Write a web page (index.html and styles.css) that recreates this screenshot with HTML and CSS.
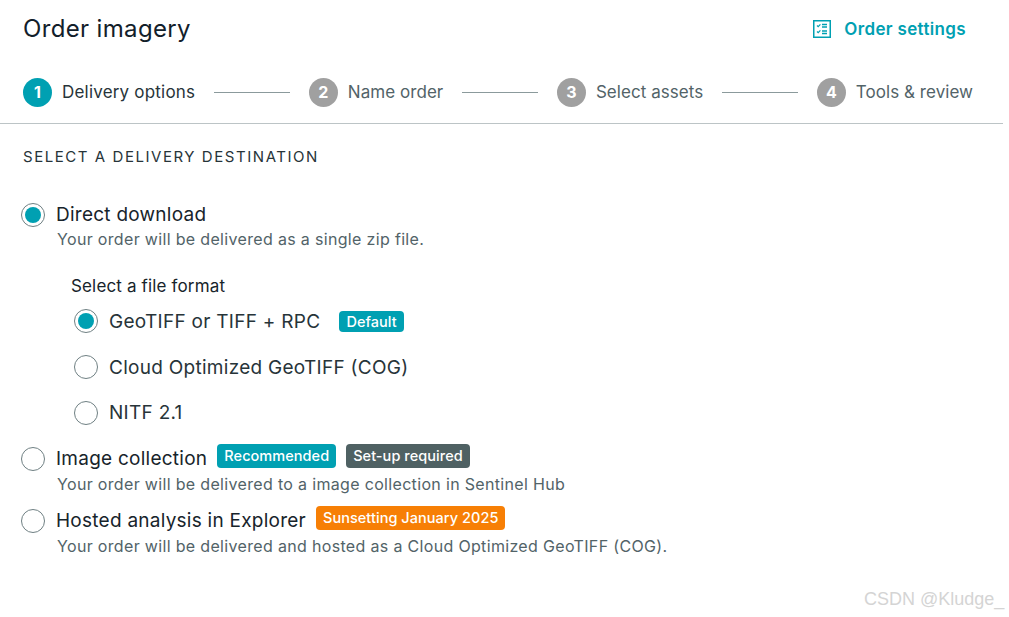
FILE: index.html
```html
<!DOCTYPE html>
<html lang="en">
<head>
    <meta charset="UTF-8">
    <title>Order imagery</title>
    <link rel="stylesheet" href="styles.css">
</head>
<body>
    <div class="panel">
        <div class="header">
            <h1>Order imagery</h1>
            <a href="#" class="settings-link">
                <svg class="settings-icon" width="18" height="18" viewBox="0 0 18 18" fill="none" stroke="#00a0b2">
                    <rect x="0.75" y="0.75" width="16.5" height="16.5" stroke-width="1.5"/>
                    <path d="M4 5.5l1.2 1.2L7.4 4.4M4 11.5l1.2 1.2 2.2-2.3" stroke-width="1.2"/>
                    <path d="M9 4.5h5M9 7h5M9 11h5M9 13.5h5" stroke-width="1.4"/>
                </svg>
                Order settings
            </a>
        </div>

        <div class="stepper">
            <div class="step active"><span class="step-num">1</span>Delivery options</div>
            <div class="step-line"></div>
            <div class="step"><span class="step-num">2</span>Name order</div>
            <div class="step-line"></div>
            <div class="step"><span class="step-num">3</span>Select assets</div>
            <div class="step-line"></div>
            <div class="step"><span class="step-num">4</span>Tools &amp; review</div>
        </div>

        <div class="content">
            <h2>SELECT A DELIVERY DESTINATION</h2>

            <div class="option first">
                <div class="option-row"><span class="radio checked"></span>Direct download</div>
                <p class="option-desc">Your order will be delivered as a single zip file.</p>
            </div>

            <div class="formats">
                <div class="formats-title">Select a file format</div>
                <div class="format-row"><span class="radio checked"></span>GeoTIFF or TIFF + RPC<span class="badge teal default-badge">Default</span></div>
                <div class="format-row"><span class="radio"></span>Cloud Optimized GeoTIFF (COG)</div>
                <div class="format-row"><span class="radio"></span>NITF 2.1</div>
            </div>

            <div class="option">
                <div class="option-row"><span class="radio"></span>Image collection<span class="badge teal">Recommended</span><span class="badge slate">Set-up required</span></div>
                <p class="option-desc">Your order will be delivered to a image collection in Sentinel Hub</p>
            </div>

            <div class="option">
                <div class="option-row"><span class="radio"></span>Hosted analysis in Explorer<span class="badge orange">Sunsetting January 2025</span></div>
                <p class="option-desc">Your order will be delivered and hosted as a Cloud Optimized GeoTIFF (COG).</p>
            </div>
        </div>
    </div>
    <div class="watermark">CSDN @Kludge_</div>
</body>
</html>
```

FILE: styles.css
```css
/* Global Styles */
body {
    font-family: 'Inter', 'Liberation Sans', sans-serif;
    background-color: #fff;
    color: #17242b;
    margin: 0;
    padding: 0;
    height: 617px;
    overflow: hidden;
}

.panel {
    width: 1003px;
}

/* Header */
.header {
    display: flex;
    justify-content: space-between;
    align-items: center;
    height: 58px;
    padding: 0 37px 0 23px;
}

h1 {
    margin: 0 0 2px;
    font-size: 24px;
    font-weight: 400;
    letter-spacing: 0.35px;
    color: #12202a;
}

.settings-link {
    display: flex;
    align-items: center;
    gap: 13px;
    color: #00a0b2;
    font-size: 17px;
    font-weight: 600;
    letter-spacing: 0.35px;
    text-decoration: none;
}

/* Stepper */
.stepper {
    display: flex;
    align-items: center;
    box-sizing: border-box;
    height: 66px;
    padding: 3px 30px 0 23px;
    border-bottom: 1px solid #bcc4c6;
    font-size: 17px;
    letter-spacing: 0.05px;
}

.step {
    display: flex;
    align-items: center;
    gap: 10px;
    color: #526368;
}

.step.active {
    color: #273439;
    letter-spacing: 0.2px;
}

.step-num {
    display: flex;
    justify-content: center;
    align-items: center;
    width: 29px;
    height: 29px;
    border-radius: 50%;
    background-color: #a0a0a0;
    color: #fff;
    font-size: 16px;
    font-weight: 700;
    letter-spacing: 0;
}

.step.active .step-num {
    background-color: #00a0b2;
}

.step-line {
    flex: 1;
    height: 1px;
    margin: 0 19px;
    background-color: #8b9a9c;
}

/* Content */
.content {
    padding: 0 0 0 21px;
}

h2 {
    margin: 0;
    padding: 24px 0 0 2px;
    font-size: 15px;
    line-height: 17px;
    font-weight: 400;
    letter-spacing: 1.55px;
    color: #273439;
}

.option {
    margin-bottom: 16px;
}

.option.first {
    margin-top: 38px;
    margin-bottom: 0;
}

.option-row {
    display: flex;
    align-items: center;
    font-size: 19px;
    line-height: 24px;
    letter-spacing: 0.25px;
    color: #17242b;
}

.option-row .radio {
    margin-right: 11px;
}

.option-desc {
    margin: 4px 0 0 36px;
    font-size: 16px;
    line-height: 18px;
    letter-spacing: 0.33px;
    color: #526368;
}

.option.first .option-desc {
    margin-top: 3px;
}

.radio {
    flex: none;
    box-sizing: border-box;
    position: relative;
    width: 24px;
    height: 24px;
    border: 1px solid #6f8083;
    border-radius: 50%;
    background-color: #fff;
}

.radio.checked::after {
    content: '';
    position: absolute;
    left: 3px;
    top: 3px;
    width: 16px;
    height: 16px;
    border-radius: 50%;
    background-color: #00a0b2;
}

/* File formats */
.formats {
    padding: 28px 0 0 50px;
}

.formats-title {
    font-size: 17px;
    line-height: 20px;
    letter-spacing: 0.15px;
    color: #17242b;
}

.format-row {
    display: flex;
    align-items: center;
    height: 24px;
    margin: 0 0 21.5px 3px;
    font-size: 19px;
    letter-spacing: 0.28px;
    color: #273439;
}

.formats-title + .format-row {
    margin-top: 13px;
    margin-bottom: 22px;
}

.format-row .radio {
    margin-right: 11px;
}

.format-row:last-child {
    margin-bottom: 22px;
}

.badge {
    display: inline-block;
    margin-left: 10px;
    margin-top: -6px;
    padding: 0 7px;
    height: 24px;
    line-height: 24px;
    border-radius: 4px;
    font-size: 14.5px;
    font-weight: 500;
    letter-spacing: 0.05px;
    color: #fff;
}

.default-badge {
    height: 21px;
    line-height: 21px;
    margin-left: 19px;
    margin-top: 0;
}

.teal {
    background-color: #00a0b2;
}

.slate {
    background-color: #4f6163;
}

.orange {
    background-color: #f77f05;
}

/* Watermark */
.watermark {
    position: absolute;
    left: 864px;
    top: 588px;
    font-family: 'Liberation Sans', sans-serif;
    font-size: 18px;
    line-height: 22px;
    color: #d4d4d4;
}
```
